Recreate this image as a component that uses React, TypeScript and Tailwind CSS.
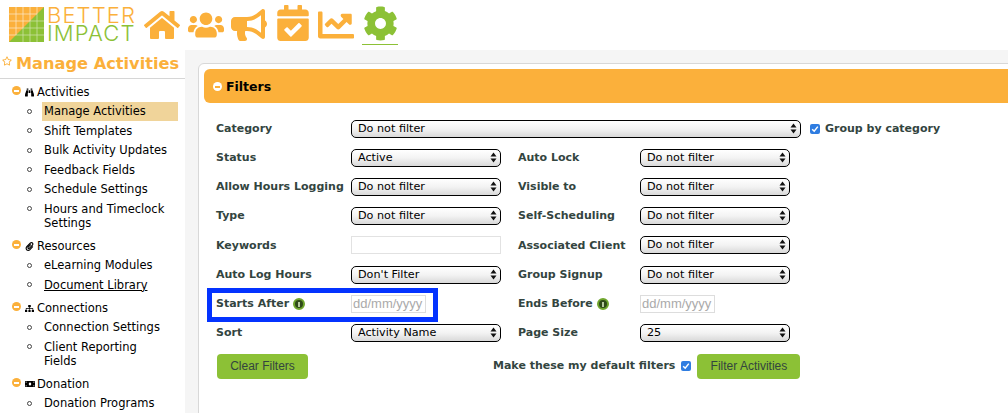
import React from 'react';
import { FaHome, FaUsers, FaBullhorn, FaCalendarCheck, FaChartLine, FaCog, FaRegStar, FaBinoculars, FaPaperclip, FaSitemap, FaMoneyBill } from 'react-icons/fa';

const font = "font-['DejaVu_Sans',sans-serif]";

const Logo = () => (
  <div className="flex items-center">
    <svg width="35" height="35" viewBox="0 0 35 35" className="shrink-0">
      <rect width="35" height="35" fill="#fbb03b" />
      <path d="M35 0V35H0Z" fill="#8cc136" />
      <path d="M7 0V28M14 0V21M21 0V14M28 0V7M0 7H28M0 14H21M0 21H14M0 28H7" stroke="#fff" strokeWidth="0.7" opacity="0.75" />
      <path d="M14 35V21M21 35V14M28 35V7M7 28H35M14 21H35M21 14H35" stroke="#fff" strokeWidth="0.7" opacity="0.6" />
    </svg>
    <div className="ml-[3px] w-[88px] font-['Inter',sans-serif] font-light text-[22px] leading-[18px] tracking-[1.1px]">
      <div className="text-[#fbb03b]">BETTER</div>
      <div className="text-[#8cc136]">IMPACT</div>
    </div>
  </div>
);

const Header = () => (
  <div className="h-[50px] flex items-start bg-white pl-[9px] pt-[6px]">
    <Logo />
    <div className="flex items-start text-[#fbb03b]">
      <FaHome size={36} className="ml-[9px] mt-[1px]" />
      <FaUsers size={36} className="ml-[8px] mt-[1px]" />
      <FaBullhorn size={36} className="ml-[7px] mt-[1px]" />
      <FaCalendarCheck size={36} className="ml-[8px] -mt-[1px]" />
      <FaChartLine size={36} className="ml-[7px] mt-[1px]" />
      <div className="ml-[8px] w-[36px] h-[39px] border-b border-[#8cc136] flex justify-center text-[#8cc136]">
        <FaCog size={35} />
      </div>
    </div>
  </div>
);

const sections = [
  { title: 'Activities', icon: <FaBinoculars size={9} />, items: ['Manage Activities', 'Shift Templates', 'Bulk Activity Updates', 'Feedback Fields', 'Schedule Settings', 'Hours and Timeclock\nSettings'] },
  { title: 'Resources', icon: <FaPaperclip size={9} />, items: ['eLearning Modules', 'Document Library'] },
  { title: 'Connections', icon: <FaSitemap size={9} />, items: ['Connection Settings', 'Client Reporting\nFields'] },
  { title: 'Donation', icon: <FaMoneyBill size={10} />, items: ['Donation Programs'] },
];

const MinusDot = ({ className }: { className: string }) => (
  <span className={`inline-flex items-center justify-center w-[9px] h-[9px] rounded-full ${className}`}>
    <span className="w-[5px] h-[2px] bg-white" />
  </span>
);

const Sidebar = () => (
  <div className="w-[185px] shrink-0 bg-white">
    <div className="h-[29px] border-b border-[#d6d6d6] flex items-start pl-[2px] pt-[5px] text-[#fbb03b]">
      <FaRegStar size={10} className="mt-[1px]" />
      <span className="ml-[4px] text-[16.2px] leading-[18px] font-bold font-['DejaVu_Sans',sans-serif] whitespace-nowrap">Manage Activities</span>
    </div>
    <div className={`${font} text-[11.5px] leading-[14px] text-black pt-[5px]`}>
      {sections.map((s) => (
        <div key={s.title} className="mb-[6px]">
          <div className="flex items-center h-[16px] pl-[12px]">
            <MinusDot className="bg-[#fbb03b] -mt-[3px]" />
            <span className="ml-[4px] w-[12px] flex">{s.icon}</span>
            <span>{s.title}</span>
          </div>
          <ul className="mt-[1.5px]">
            {s.items.map((item) => (
              <li key={item} className="flex items-start pl-[27px] pr-[7px] mb-[0.5px]">
                <span className="w-[5px] h-[5px] mt-[7px] rounded-full border border-[#444] shrink-0" />
                <span className={`ml-[10px] px-[2px] py-[2.5px] flex-1 whitespace-pre-line ${item === 'Manage Activities' ? 'bg-[#f0d49a]' : ''} ${item === 'Document Library' ? 'underline' : ''}`}>{item}</span>
              </li>
            ))}
          </ul>
        </div>
      ))}
    </div>
  </div>
);

const Select = ({ value, wide }: { value: string; wide?: boolean }) => (
  <div className={`relative h-[18px] ${wide ? 'w-[450px]' : 'w-[150px]'} shrink-0`}>
    <select
      defaultValue={value}
      className={`${font} block appearance-none w-full h-full border border-black rounded-[5px] pl-[6px] text-[11.2px] leading-[16px] text-black bg-gradient-to-b from-white via-[#f3f3f3] to-[#d9d9d9]`}
    >
      <option>{value}</option>
    </select>
    <svg width="7" height="11" viewBox="0 0 7 11" className="absolute right-[4px] top-[3px] pointer-events-none">
      <path d="M3.5 0.5L6.5 4.5H0.5ZM3.5 10.5L0.5 6.5H6.5Z" fill="#111" />
    </svg>
  </div>
);

const Info = () => (
  <span className="inline-flex items-center justify-center w-[12px] h-[12px] rounded-full bg-[#2f4a1a] border-2 border-[#6fa52d] ml-[4px]">
    <span className="w-[2px] h-[5px] bg-[#b7c9a0]" />
  </span>
);

const Label = ({ text, info, className = 'w-[135px]' }: { text: string; info?: boolean; className?: string }) => (
  <div className={`${className} shrink-0 flex items-center pt-[1px] font-bold text-[11px] text-[#33453f] whitespace-nowrap ${font}`}>
    {text}
    {info && <Info />}
  </div>
);

const DateInput = () => (
  <input
    placeholder="dd/mm/yyyy"
    className="block w-[75px] h-[18px] border border-[#ddd] pl-[1px] text-[13px] text-[#aaa] placeholder:text-[#aaa] font-['Liberation_Sans',sans-serif] bg-white"
  />
);

const Row = ({ children }: { children: React.ReactNode }) => (
  <div className="relative h-[29.2px] flex items-center">{children}</div>
);

const Check = () => (
  <span className="flex items-center justify-center w-[10px] h-[10px] rounded-[2px] bg-[#2f7de1] shrink-0">
    <svg width="8" height="8" viewBox="0 0 8 8">
      <path d="M1.2 4.2L3.2 6.2L6.8 1.6" fill="none" stroke="#fff" strokeWidth="1.5" />
    </svg>
  </span>
);

const GreenButton = ({ text, className }: { text: string; className: string }) => (
  <button className={`${className} h-[25px] rounded-[4px] bg-[#8cc136] text-[#33453f] text-[12px] font-['Liberation_Sans',sans-serif]`}>{text}</button>
);

const Right = ({ label, value }: { label: string; value: string }) => (
  <>
    <Label text={label} className="w-[122px] ml-[17px]" />
    <Select value={value} />
  </>
);

const Filters = () => (
  <div className="w-[830px] shrink-0 h-[400px] bg-white border border-[#d8d8d8] rounded-tl-[6px] pl-[5px] pt-[5px]">
    <div className="h-[34px] bg-[#fbb03b] rounded-l-[6px] flex items-center pl-[9px]">
      <MinusDot className="bg-white [&>span]:bg-[#fbb03b] mt-[1px]" />
      <span className={`${font} ml-[4px] pt-[2px] font-bold text-[12.5px] text-black`}>Filters</span>
    </div>
    <div className="pl-[12px] pt-[11px]">
      <Row>
        <Label text="Category" />
        <Select value="Do not filter" wide />
        <span className="ml-[9px]"><Check /></span>
        <span className="ml-[5px]"><Label text="Group by category" className="" /></span>
      </Row>
      <Row><Label text="Status" /><Select value="Active" /><Right label="Auto Lock" value="Do not filter" /></Row>
      <Row><Label text="Allow Hours Logging" /><Select value="Do not filter" /><Right label="Visible to" value="Do not filter" /></Row>
      <Row><Label text="Type" /><Select value="Do not filter" /><Right label="Self-Scheduling" value="Do not filter" /></Row>
      <Row>
        <Label text="Keywords" />
        <input className="block w-[150px] h-[18px] border border-[#e2e2e2] bg-white shrink-0" />
        <Right label="Associated Client" value="Do not filter" />
      </Row>
      <Row><Label text="Auto Log Hours" /><Select value="Don't Filter" /><Right label="Group Signup" value="Do not filter" /></Row>
      <Row>
        <Label text="Starts After" info />
        <div className="w-[150px] shrink-0"><DateInput /></div>
        <Label text="Ends Before" info className="w-[122px] ml-[17px]" />
        <DateInput />
        <div className="absolute left-[-9px] top-[-1px] w-[231px] h-[34px] border-[5px] border-[#0433ff]" />
      </Row>
      <Row><Label text="Sort" /><Select value="Activity Name" /><Right label="Page Size" value="25" /></Row>
      <div className="flex items-center mt-[6px]">
        <GreenButton text="Clear Filters" className="w-[91px] ml-[1px]" />
        <span className="ml-[185px]"><Label text="Make these my default filters" className="" /></span>
        <span className="ml-[6px]"><Check /></span>
        <GreenButton text="Filter Activities" className="w-[103px] ml-[6px]" />
      </div>
    </div>
  </div>
);

export default function App() {
  return (
    <div className="w-[1008px] h-[413px] overflow-hidden bg-white">
      <Header />
      <div className="flex h-[363px] overflow-hidden">
        <Sidebar />
        <div className="flex-1 bg-[#f5f5f5] pl-[13px] pt-[13px] overflow-hidden">
          <Filters />
        </div>
      </div>
    </div>
  );
}
